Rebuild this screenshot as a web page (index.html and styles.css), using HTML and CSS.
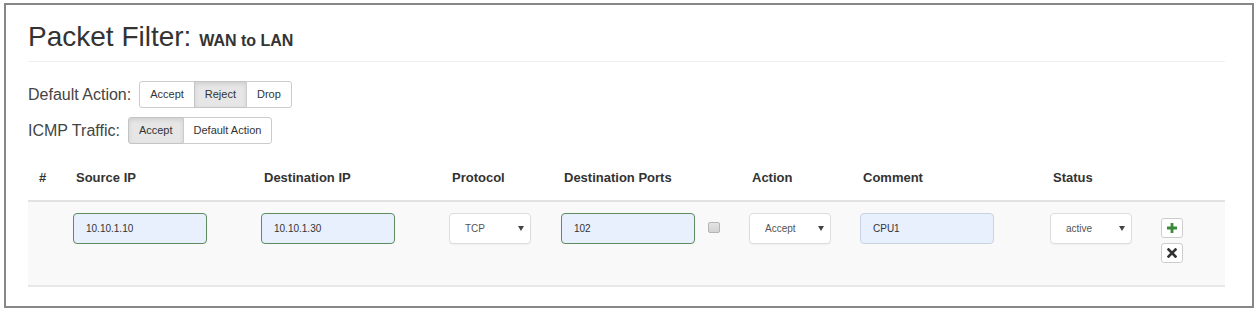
FILE: index.html
```html
<!DOCTYPE html>
<html lang="en">
<head>
    <meta charset="UTF-8">
    <meta name="viewport" content="width=device-width, initial-scale=1.0">
    <title>Packet Filter</title>
    <link rel="stylesheet" href="styles.css">
</head>
<body>
    <div class="panel">
        <div class="page-header">
            <h1>Packet Filter: <small>WAN to LAN</small></h1>
        </div>

        <div class="setting">
            <span class="setting-label">Default Action:</span>
            <div class="btn-group">
                <button class="btn">Accept</button>
                <button class="btn active">Reject</button>
                <button class="btn">Drop</button>
            </div>
        </div>
        <div class="setting">
            <span class="setting-label">ICMP Traffic:</span>
            <div class="btn-group">
                <button class="btn active">Accept</button>
                <button class="btn">Default Action</button>
            </div>
        </div>

        <table class="rules">
            <colgroup>
                <col style="width: 37px">
                <col style="width: 188px">
                <col style="width: 188px">
                <col style="width: 112px">
                <col style="width: 188px">
                <col style="width: 111px">
                <col style="width: 190px">
                <col style="width: 111px">
                <col style="width: 72px">
            </colgroup>
            <thead>
                <tr>
                    <th>#</th>
                    <th>Source IP</th>
                    <th>Destination IP</th>
                    <th>Protocol</th>
                    <th>Destination Ports</th>
                    <th>Action</th>
                    <th>Comment</th>
                    <th>Status</th>
                    <th></th>
                </tr>
            </thead>
            <tbody>
                <tr>
                    <td></td>
                    <td><input type="text" class="field ok" value="10.10.1.10"></td>
                    <td><input type="text" class="field ok" value="10.10.1.30"></td>
                    <td>
                        <div class="select"><span>TCP</span><i class="caret"></i></div>
                    </td>
                    <td>
                        <div class="ports">
                            <input type="text" class="field ok" value="102">
                            <span class="check"></span>
                        </div>
                    </td>
                    <td>
                        <div class="select"><span>Accept</span><i class="caret"></i></div>
                    </td>
                    <td><input type="text" class="field" value="CPU1"></td>
                    <td>
                        <div class="select"><span>active</span><i class="caret"></i></div>
                    </td>
                    <td class="row-tools">
                        <button class="icon-btn add" title="Add">
                            <svg width="10" height="10" viewBox="0 0 10 10"><path d="M3.6 0h2.8v3.6H10v2.8H6.4V10H3.6V6.4H0V3.6h3.6z" fill="#3a8a3a"/></svg>
                        </button>
                        <button class="icon-btn del" title="Remove">
                            <svg width="10" height="10" viewBox="0 0 10 10"><path d="M1.5 1.5l7 7M8.5 1.5l-7 7" stroke="#333" stroke-width="2.6" stroke-linecap="square"/></svg>
                        </button>
                    </td>
                </tr>
            </tbody>
        </table>
    </div>
</body>
</html>
```

FILE: styles.css
```css
body {
    margin: 0;
    font-family: "Liberation Sans", Arial, sans-serif;
    color: #333;
    background: #fff;
}
.panel {
    margin: 3px 3px 0 4px;
    height: 301px;
    border: 2px solid #878787;
    padding: 0 27px 0 22px;
    overflow: hidden;
}
.page-header {
    padding: 16px 0 8px;
    border-bottom: 1px solid #eee;
}
h1 {
    margin: 0;
    font-size: 28px;
    line-height: 32px;
    font-weight: normal;
    color: #333;
}
h1 small {
    font-size: 16px;
    line-height: 1;
    font-weight: bold;
    color: #333;
}
.setting {
    display: flex;
    align-items: center;
    gap: 8px;
    margin-top: 9px;
}
.page-header + .setting {
    margin-top: 19px;
}
.setting-label {
    font-size: 16px;
    color: #444;
}
.btn-group {
    display: flex;
}
.btn {
    font-family: inherit;
    font-size: 11px;
    line-height: 17px;
    padding: 4px 10px;
    color: #333;
    background: #fff;
    border: 1px solid #ccc;
    margin-left: -1px;
}
.btn:first-child {
    margin-left: 0;
    border-radius: 3px 0 0 3px;
}
.btn:last-child {
    border-radius: 0 3px 3px 0;
}
.btn.active {
    background: #e6e6e6;
    border-color: #c4c4c4;
    box-shadow: inset 0 2px 4px rgba(0, 0, 0, 0.1);
}
.rules {
    table-layout: fixed;
    width: 1197px;
    border-collapse: collapse;
    margin-top: 16px;
}
.rules th {
    text-align: left;
    font-size: 13px;
    line-height: 18px;
    font-weight: bold;
    color: #333;
    padding: 9px 8px 13px 11px;
    border-bottom: 2px solid #e2e2e2;
}
.rules td {
    vertical-align: top;
    padding: 11px 8px 41px;
    background: #f9f9f9;
    border-bottom: 2px solid #e8e8e8;
}
.field {
    box-sizing: border-box;
    width: 134px;
    height: 31px;
    padding: 0 12px;
    font-family: inherit;
    font-size: 10px;
    color: #333;
    background: #e8f0fe;
    border: 1px solid #c9d3df;
    border-radius: 4px;
    display: block;
}
.field.ok {
    border-color: #5e8a5e;
}
.select {
    box-sizing: border-box;
    width: 82px;
    height: 31px;
    padding: 0 6px 0 15px;
    display: flex;
    align-items: center;
    justify-content: space-between;
    font-size: 10px;
    color: #555;
    background: #fff;
    border: 1px solid #ddd;
    border-radius: 4px;
    box-shadow: 0 1px 1px rgba(0, 0, 0, 0.04);
}
.caret {
    width: 0;
    height: 0;
    border-left: 3px solid transparent;
    border-right: 3px solid transparent;
    border-top: 5px solid #444;
}
.ports {
    display: flex;
    align-items: flex-start;
}
.check {
    box-sizing: border-box;
    width: 12px;
    height: 11px;
    margin: 9px 0 0 13px;
    border: 1px solid #b5b5b5;
    border-radius: 2px;
    background: linear-gradient(#e4e4e4, #d2d2d2);
}
.rules td.row-tools {
    padding-top: 16px;
    padding-bottom: 0;
}
.icon-btn {
    display: flex;
    align-items: center;
    justify-content: center;
    width: 22px;
    height: 20px;
    padding: 0;
    margin-bottom: 5px;
    background: #fff;
    border: 1px solid #ccc;
    border-radius: 3px;
}
```
